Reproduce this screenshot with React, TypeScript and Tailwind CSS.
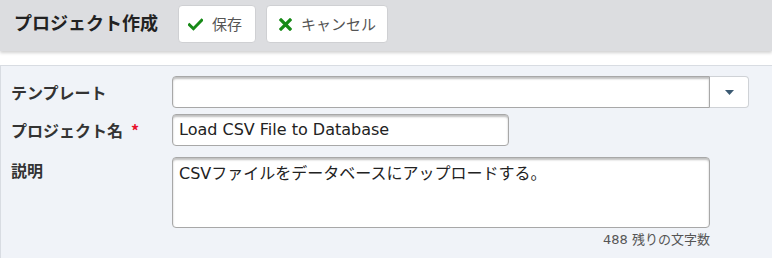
import React from "react";

const jp = "font-['Meiryo','Noto_Sans_CJK_JP',sans-serif]";
const mixed = "font-['DejaVu_Sans','Noto_Sans_CJK_JP',sans-serif]";

// FA-style check / times icons, green
function CheckIcon() {
  return (
    <svg width="15" height="13" viewBox="0 0 16 13" className="shrink-0">
      <path d="M1.5 6.8 L5.8 11 L14.5 2" fill="none" stroke="#178a17" strokeWidth="3.2" strokeLinecap="square" />
    </svg>
  );
}

function TimesIcon() {
  return (
    <svg width="13" height="13" viewBox="0 0 13 13" className="shrink-0">
      <path d="M2 2 L11 11 M11 2 L2 11" fill="none" stroke="#178a17" strokeWidth="3.2" strokeLinecap="square" />
    </svg>
  );
}

const inputBox = "bg-white border border-[#a8a8a8] rounded-[4px] shadow-[inset_0_2px_2px_rgba(0,0,0,0.25)]";

export default function App() {
  return (
    <div className={`w-[772px] h-[258px] bg-white overflow-hidden ${jp} text-[#333]`}>
      {/* header */}
      <div className="h-[51px] bg-[#dcdde0] flex items-start pt-[5px] pl-[14px] shadow-[0_2px_3px_rgba(0,0,0,0.18)] relative z-10">
        <div className="h-[38px] flex items-center text-[18px] font-bold text-[#222] w-[164px] pb-[3px]">プロジェクト作成</div>
        <div className="flex gap-[10px]">
          <button className="h-[38px] w-[78px] bg-white border border-[#cfd0d3] rounded-[4px] flex items-center gap-[9px] pl-[9px] text-[15px] text-[#555]">
            <CheckIcon />
            <span>保存</span>
          </button>
          <button className="h-[38px] w-[122px] bg-white border border-[#cfd0d3] rounded-[4px] flex items-center gap-[9px] pl-[12px] text-[15px] text-[#555]">
            <TimesIcon />
            <span>キャンセル</span>
          </button>
        </div>
      </div>

      {/* form panel */}
      <div className="mt-[14px] h-[200px] bg-[#f0f3f8] border-t border-l border-[#d8dce2] pl-[10px] pt-[10px]">
        <div className="flex items-center h-[32px]">
          <label className="w-[161px] text-[16px] font-bold text-[#333]">テンプレート</label>
          <div className="flex">
            <div className={`w-[538px] h-[32px] ${inputBox} rounded-r-none`}></div>
            <div className="w-[39px] h-[32px] bg-white border border-[#cfd2d6] border-l-0 rounded-r-[4px] flex items-center justify-center">
              <svg width="9" height="5" viewBox="0 0 9 5">
                <path d="M0 0 H9 L4.5 5 Z" fill="#3b5a72" />
              </svg>
            </div>
          </div>
        </div>

        <div className="flex items-center h-[32px] mt-[6px]">
          <label className="w-[161px] text-[16px] font-bold text-[#333]">
            プロジェクト名<span className="text-[#e8112d] ml-[8px]">*</span>
          </label>
          <div className={`w-[337px] h-[32px] ${inputBox} ${mixed} flex items-center px-[6px] text-[16px] text-[#222]`}>
            Load CSV File to Database
          </div>
        </div>

        <div className="flex mt-[11px]">
          <label className="w-[161px] text-[16px] font-bold text-[#333] pt-[1px]">説明</label>
          <div className="flex flex-col items-end">
            <div className={`w-[538px] h-[71px] ${inputBox} ${mixed} px-[6px] pt-[4px] text-[16px] text-[#222]`}>
              CSVファイルをデータベースにアップロードする。
            </div>
            <div className={`${mixed} text-[13px] text-[#555] mt-[2px]`}>488 残りの文字数</div>
          </div>
        </div>
      </div>
    </div>
  );
}
